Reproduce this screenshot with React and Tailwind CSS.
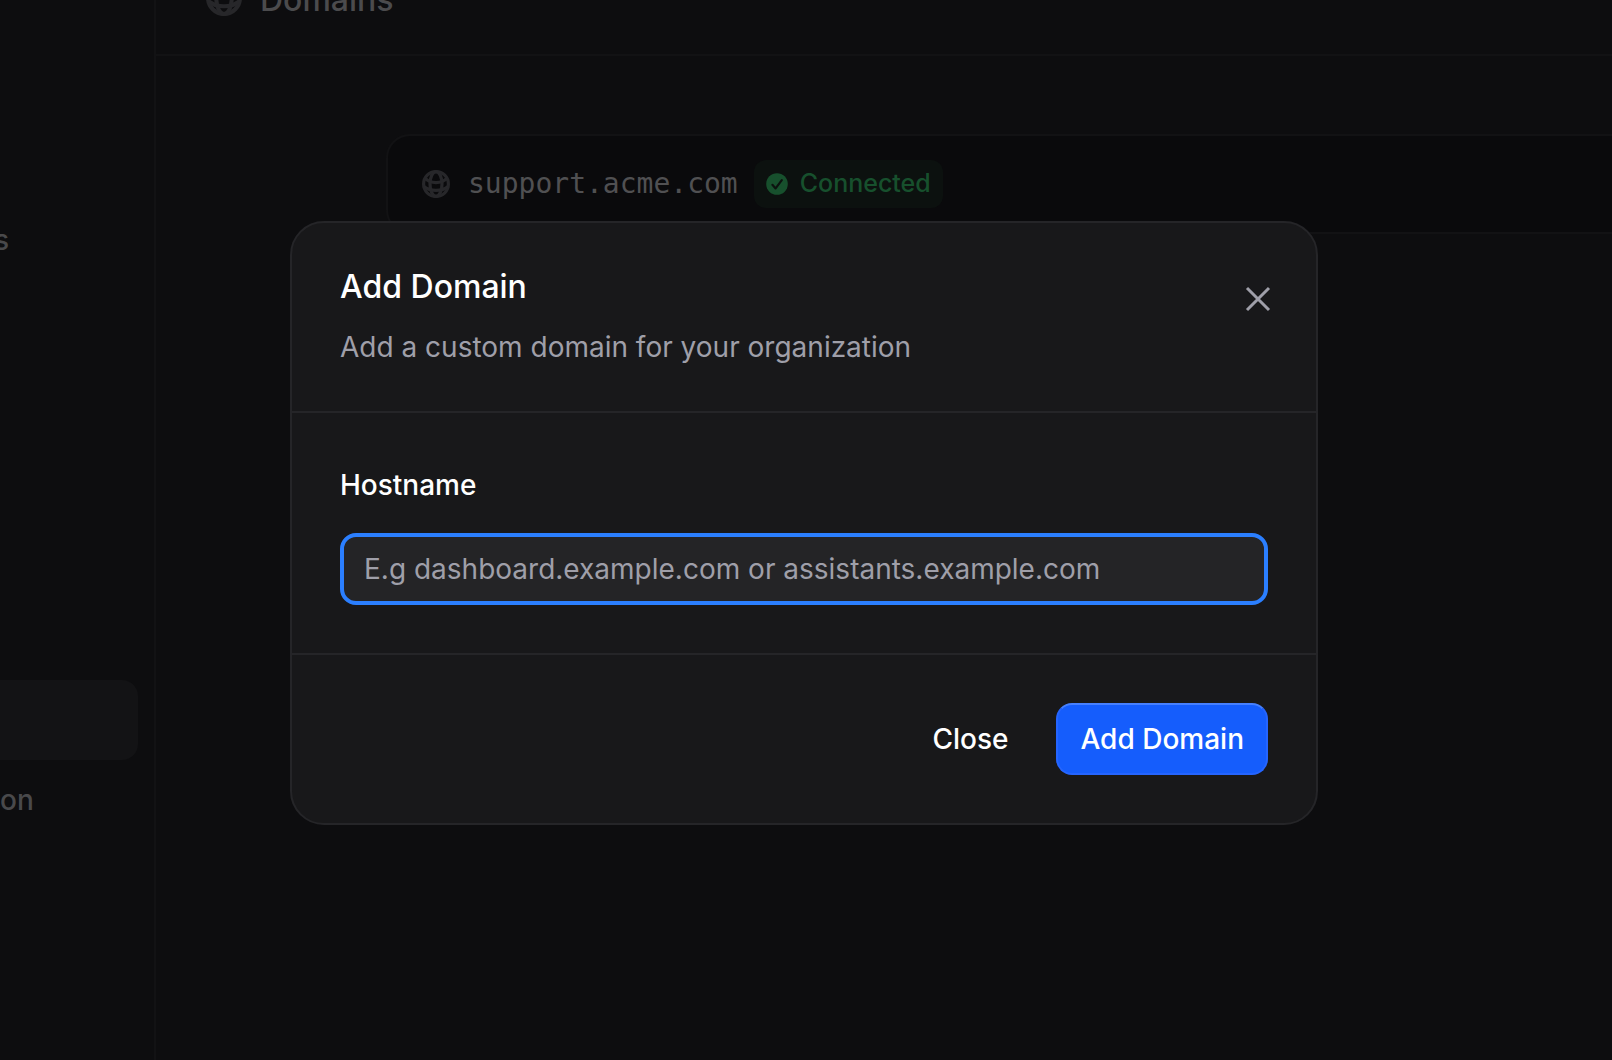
function Globe({ className }) {
  return (
    <svg viewBox="0 0 28 28" className={className} fill="none" stroke="currentColor" strokeWidth="3.2" aria-hidden="true">
      <circle cx="14" cy="14" r="12.4" />
      <ellipse cx="14" cy="14" rx="6" ry="12.4" />
      <path d="M3 8.2C5.6 11 9.4 12.6 14 12.6S22.4 11 25 8.2" />
      <path d="M1.6 16.2C5 19 9.2 20.4 14 20.4S23 19 26.400 16.2" />
    </svg>
  );
}

function CheckBadge() {
  return (
    <svg viewBox="0 0 22 22" className="size-[22px]" aria-hidden="true">
      <circle cx="11" cy="11" r="10.8" fill="#17502d" />
      <path d="M6.4 11.8l3.2 3.6 6.2-8.2" fill="none" stroke="#0c120f" strokeWidth="2.2" strokeLinecap="round" strokeLinejoin="round" />
    </svg>
  );
}

function Sidebar() {
  return (
    <nav className="flex w-[156px] shrink-0 flex-col border-r-2 border-[#121214] pt-[200px] pr-4 text-[28px] font-medium leading-10 text-[#49494b]">
      <a href="#settings" className="flex h-20 items-center"><span className="-ml-[6px]">s</span></a>
      <div className="h-[400px]" />
      <a href="#domains" aria-label="Domains" className="h-20 rounded-r-2xl bg-[#131315]" />
      <a href="#organization" className="flex h-20 items-center">on</a>
    </nav>
  );
}

function DomainCard() {
  return (
    <section className="ml-[230px] flex h-[100px] items-center rounded-l-3xl border-2 border-r-0 border-[#121214] bg-[#0a0a0c] pl-[34px]">
      <Globe className="size-7 text-[#27272a]" />
      <span className="ml-[18px] font-['DejaVu_Sans_Mono',monospace] text-[28px] text-[#505052]">support.acme.com</span>
      <span className="ml-4 flex h-12 items-center gap-3 rounded-xl bg-[#0c110f] px-3 text-[25px] font-medium text-[#17502d]">
        <CheckBadge />
        Connected
      </span>
    </section>
  );
}

function AddDomainDialog() {
  return (
    <form role="dialog" aria-modal="true" aria-labelledby="dialog-title" className="w-full max-w-[1028px] rounded-[34px] border-2 border-[#252528] bg-[#18181a]">
      <header className="flex h-[190px] items-start justify-between border-b-2 border-[#252528] px-12 pt-10">
        <div>
          <h2 id="dialog-title" className="text-[32px] font-medium leading-12 text-white">Add Domain</h2>
          <p className="mt-4 text-[28px] leading-10 text-[#9f9fa9]">Add a custom domain for your organization</p>
        </div>
        <button type="button" aria-label="Close dialog" className="-mr-2 mt-[18px] text-[#9f9fa9]">
          <svg viewBox="0 0 36 36" className="size-9" fill="none" stroke="currentColor" strokeWidth="3">
            <path d="M7 7l22 22M29 7L7 29" />
          </svg>
        </button>
      </header>
      <div className="flex flex-col gap-7 px-12 pt-[52px] pb-12">
        <label htmlFor="hostname" className="text-[28px] font-medium leading-10 text-white">Hostname</label>
        <input id="hostname" placeholder="E.g dashboard.example.com or assistants.example.com" className="h-[72px] w-full rounded-2xl border-4 border-[#2b7fff] bg-[#242426] px-5 text-[28px] text-white outline-none placeholder:text-[#9f9fa9]" />
      </div>
      <footer className="flex justify-end gap-6 border-t-2 border-[#252528] px-12 py-12 text-[28px] font-medium text-white">
        <button type="button" className="h-[72px] px-6">Close</button>
        <button type="submit" className="h-[72px] rounded-2xl border-2 border-[#2565ff] border-t-[#4680ff] bg-[#155dfc] px-[22px]">Add Domain</button>
      </footer>
    </form>
  );
}

export default function App() {
  return (
    <div className="relative flex min-h-screen overflow-hidden bg-[#0d0d0f] font-['Inter',sans-serif]">
      <Sidebar />
      <main className="min-w-0 flex-1">
        <header className="flex h-14 items-start border-b-2 border-[#121214] pl-[50px]">
          <Globe className="-mt-5 size-9 shrink-0 text-[#27272a]" />
          <h1 className="-mt-6 ml-[18px] text-[32px] font-medium leading-12 text-[#4b4b4d]">Domains</h1>
        </header>
        <div className="pt-[78px]">
          <DomainCard />
        </div>
      </main>
      <div className="absolute inset-0 flex items-center justify-center pr-1 pb-[14px]">
        <AddDomainDialog />
      </div>
    </div>
  );
}
